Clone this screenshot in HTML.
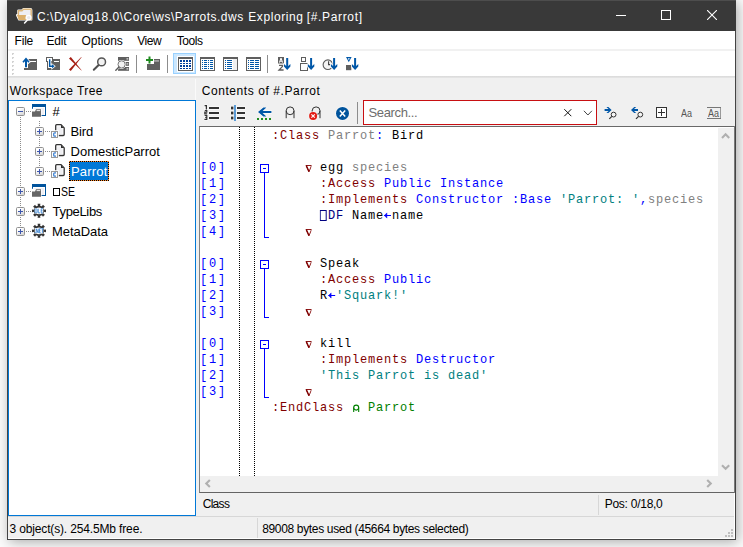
<!DOCTYPE html>
<html>
<head>
<meta charset="utf-8">
<title>Parrots.dws Exploring</title>
<style>
html,body{margin:0;padding:0;}
body{width:743px;height:547px;overflow:hidden;position:relative;background:#fbfbfb;font-family:"Liberation Sans",sans-serif;font-size:12px;color:#000;}
div,span,svg{position:absolute;box-sizing:border-box;}
#shadowL{left:0;top:0;width:7px;height:547px;background:linear-gradient(to right,#f8f8f8,#e2e2e2);}
#shadowR{left:736px;top:0;width:7px;height:547px;background:linear-gradient(to right,#c9c9c9,#ececec);}
#shadowB{left:0;top:540px;width:743px;height:7px;background:linear-gradient(to bottom,#c8c8c8,#f2f2f2);}
#win{left:7px;top:0;width:729px;height:540px;background:#f0f0f0;border:1px solid #444;box-shadow:2px 2px 12px 0 rgba(0,0,0,0.32);}
#title{left:7px;top:0;width:729px;height:31px;background:#393939;border-top:1px solid #4d4d4d;}
#menubar{left:8px;top:31px;width:727px;height:18px;background:#fff;}
#menuline{left:8px;top:49px;width:727px;height:2px;background:#f1f1f1;}
#toolbar{left:8px;top:51px;width:727px;height:25px;background:#fff;}
#toolline{left:8px;top:76px;width:727px;height:2px;background:linear-gradient(to bottom,#d9d9d9,#e6e6e6);}
#tree{left:8px;top:100px;width:188px;height:416px;background:#fff;border:1px solid #0078d7;}
#sel{left:69px;top:161px;width:40px;height:20px;background:#0078d7;}
#sel i{position:absolute;}
#sel .h{left:0;width:40px;height:1px;background:repeating-linear-gradient(to right,#ff8a2a 0 1px,#000 1px 2px);}
#sel .v{top:0;width:1px;height:20px;background:repeating-linear-gradient(to bottom,#ff8a2a 0 1px,#000 1px 2px);}
#editor{left:199px;top:126px;width:536px;height:367px;background:#fff;border-left:1px solid #828282;border-top:1px solid #696969;border-bottom:1px solid #646464;}
#vsb{left:718px;top:128px;width:16px;height:348px;background:#f0f0f0;}
#hsb{left:200px;top:476px;width:534px;height:16px;background:#f0f0f0;}
.code{font-family:"Liberation Mono",monospace;font-size:13.33px;white-space:pre;line-height:16px;height:16px;left:272.4px;letter-spacing:0.889px;transform-origin:0 0;transform:scaleX(0.90);}
.code span{position:static}
.code svg{position:static;display:inline-block;vertical-align:top;letter-spacing:0;}
.ln{font-family:"Liberation Mono",monospace;font-size:13.33px;white-space:pre;line-height:16px;height:16px;left:199.6px;color:#0000ff;letter-spacing:2px;transform-origin:0 0;transform:scaleX(0.90);}
.k{color:#800000}.g{color:#808080}.b{color:#0000ff}.n{color:#0000ff}.s{color:#008080}.c{color:#008000}.q{color:#000080}
.dotv{width:1px;background-image:linear-gradient(to bottom,#000 50%,#fff 50%);background-size:1px 2px;}
.fold{border:1px solid #0000ff;background:#fff;width:9px;height:9px;left:260px;}
.fold i{position:absolute;left:2px;top:3px;width:3px;height:1px;background:#0000ff;}
.fl{left:264px;width:5px;border-left:1px solid #0000ff;border-bottom:1px solid #0000ff;}
.hl{height:1px;background:#d7d7d7;}
.vl{width:1px;background:#d7d7d7;}
</style>
</head>
<body>

<div id="win"></div>
<div id="title"></div>
<svg style="left:15px;top:6px" width="19" height="18" viewBox="0 0 19 18">
<path d="M3.4,4.8 H7 L8.4,3.2 H15.4 Q16.2,3.2 16.2,4 V13.4 H4.2 L2.2,9.2 H3.4 Z" fill="#fff" stroke="#fff" stroke-width="2.4" stroke-linejoin="round"/>
<path d="M3.4,4.8 H7 L8.4,3.2 H15.4 Q16.2,3.2 16.2,4 V13.4 H4.2 L3.4,9.2 Z" fill="#eeeef3" stroke="#dcb67a" stroke-width="1.4" stroke-linejoin="round"/>
<path d="M1.9,9 H11 L10,13.9 H4 Z" fill="#dcb06c"/>
<path d="M12.2,14.2 l-2.6,2.8" stroke="#fff" stroke-width="1.5" stroke-linecap="round"/>
<circle cx="13.7" cy="11.6" r="2.3" fill="#e9e9ee" stroke="#fff" stroke-width="1.2"/>
</svg>
<svg style="left:616px;top:10px" width="10" height="10" viewBox="0 0 10 10" shape-rendering="crispEdges"><rect x="0" y="5" width="10" height="1" fill="#fff"/></svg>
<svg style="left:661px;top:10px" width="10" height="10" viewBox="0 0 10 10" shape-rendering="crispEdges"><rect x="0.5" y="0.5" width="9" height="9" fill="none" stroke="#fff" stroke-width="1"/></svg>
<svg style="left:707px;top:10px" width="10" height="10" viewBox="0 0 10 10"><path d="M0,0 L10,10 M10,0 L0,10" stroke="#fff" stroke-width="1.1" fill="none"/></svg>
<div id="menubar"></div><div id="menuline"></div>
<div id="toolbar"></div>
<div id="toolline"></div>
<div style="left:195px;top:79px;width:1px;height:21px;background:#fafafa"></div>
<svg style="left:8px;top:51px" width="727" height="25" viewBox="0 0 727 25"><rect x="4" y="2" width="2" height="2" fill="#d2d2d2"/><rect x="5" y="3" width="1" height="1" fill="#f4f4f4"/><rect x="4" y="6" width="2" height="2" fill="#d2d2d2"/><rect x="5" y="7" width="1" height="1" fill="#f4f4f4"/><rect x="4" y="10" width="2" height="2" fill="#d2d2d2"/><rect x="5" y="11" width="1" height="1" fill="#f4f4f4"/><rect x="4" y="14" width="2" height="2" fill="#d2d2d2"/><rect x="5" y="15" width="1" height="1" fill="#f4f4f4"/><rect x="4" y="18" width="2" height="2" fill="#d2d2d2"/><rect x="5" y="19" width="1" height="1" fill="#f4f4f4"/><rect x="4" y="22" width="2" height="2" fill="#d2d2d2"/><rect x="5" y="23" width="1" height="1" fill="#f4f4f4"/><rect x="20" y="8" width="9" height="11" fill="#5f5f5f"/><rect x="16" y="17" width="13" height="2" fill="#5f5f5f"/><rect x="22" y="10" width="6" height="1" fill="#fff"/><path d="M18,6.6 l3.6,4.2 l-1.2,1.0 l-1.4,-1.6 v6 h-2 v-6 l-1.4,1.6 l-1.2,-1.0 z" fill="#0057a8" stroke="#fff" stroke-width="1.6" paint-order="stroke"/><rect x="39" y="8" width="13" height="11" fill="#5f5f5f"/><rect x="46" y="10" width="5" height="1" fill="#fff"/><rect x="38.5" y="6.5" width="6" height="4" fill="#fff" stroke="#5f5f5f" stroke-width="1"/><path d="M41.7,9 v6.3 h2.6" fill="none" stroke="#fff" stroke-width="3.2"/><path d="M44,13.3 l2.6,2 l-2.6,2 z" fill="#0057a8" stroke="#fff" stroke-width="1.4" paint-order="stroke"/><path d="M41.7,8.2 v7.1 h2.6" fill="none" stroke="#0057a8" stroke-width="1.4"/><path d="M61,7.4 L62.8,5.9 L73.6,19.3 L73.3,19.6 Z" fill="#a61d12"/><path d="M61,18.6 L62.8,20.1 L73.6,6.3 L73.3,6 Z" fill="#a61d12"/><circle cx="93.6" cy="10.9" r="3.9" fill="#f2f2f2" stroke="#555" stroke-width="1.5"/><path d="M90.4,14.2 L85.8,18.8" stroke="#505050" stroke-width="2" stroke-linecap="round"/><rect x="110" y="6" width="11" height="3.8" fill="#5f5f5f"/><rect x="118.5" y="7.4" width="1.8" height="1" fill="#fff"/><rect x="110" y="11" width="11" height="3.8" fill="#5f5f5f"/><rect x="118.5" y="12.4" width="1.8" height="1" fill="#fff"/><rect x="110" y="16" width="11" height="3.8" fill="#5f5f5f"/><rect x="118.5" y="17.4" width="1.8" height="1" fill="#fff"/><circle cx="113.6" cy="13.4" r="3.6" fill="#f2f2f2" stroke="#fff" stroke-width="1.8"/><path d="M111,16 L107.8,19.2" stroke="#fff" stroke-width="2.4" stroke-linecap="round"/><circle cx="113.6" cy="13.4" r="3.6" fill="#f2f2f2" stroke="#777" stroke-width="1"/><path d="M111,16 L107.8,19.2" stroke="#5a5a5a" stroke-width="1.4" stroke-linecap="round"/><rect x="128" y="4" width="1" height="18" fill="#8d8d8d"/><rect x="139" y="8" width="13" height="11" fill="#5f5f5f"/><rect x="145" y="9.5" width="6" height="0.9" fill="#e4e4e4"/><rect x="137" y="5" width="9" height="8" fill="#fff"/><rect x="138" y="8" width="7" height="2" fill="#1e8a1e"/><rect x="140.5" y="5.5" width="2" height="7" fill="#1e8a1e"/><rect x="159" y="4" width="1" height="18" fill="#8d8d8d"/><rect x="165.5" y="2.5" width="22" height="20" fill="#cce8ff" stroke="#99d1ff" stroke-width="1"/><rect x="169" y="5" width="17" height="16" fill="#fff"/><rect x="170" y="6" width="15" height="14" fill="#5f5f5f"/><rect x="171" y="8" width="13" height="11" fill="#fff"/><rect x="172" y="9" width="2" height="2" fill="#003f9e"/><rect x="172" y="12" width="2" height="1" fill="#003f9e"/><rect x="172" y="14" width="2" height="2" fill="#003f9e"/><rect x="172" y="17" width="2" height="1" fill="#003f9e"/><rect x="175" y="9" width="2" height="2" fill="#003f9e"/><rect x="175" y="12" width="2" height="1" fill="#003f9e"/><rect x="175" y="14" width="2" height="2" fill="#003f9e"/><rect x="175" y="17" width="2" height="1" fill="#003f9e"/><rect x="178" y="9" width="2" height="2" fill="#003f9e"/><rect x="178" y="12" width="2" height="1" fill="#003f9e"/><rect x="178" y="14" width="2" height="2" fill="#003f9e"/><rect x="178" y="17" width="2" height="1" fill="#003f9e"/><rect x="181" y="9" width="2" height="2" fill="#003f9e"/><rect x="181" y="12" width="2" height="1" fill="#003f9e"/><rect x="181" y="14" width="2" height="2" fill="#003f9e"/><rect x="181" y="17" width="2" height="1" fill="#003f9e"/><rect x="192" y="6" width="15" height="14" fill="#5f5f5f"/><rect x="193" y="8" width="13" height="11" fill="#fff"/><rect x="194" y="9" width="1" height="1" fill="#0057a8"/><rect x="196" y="9" width="3" height="1" fill="#0057a8"/><rect x="200" y="9" width="1" height="1" fill="#0057a8"/><rect x="202" y="9" width="3" height="1" fill="#0057a8"/><rect x="194" y="11" width="1" height="1" fill="#0057a8"/><rect x="196" y="11" width="3" height="1" fill="#0057a8"/><rect x="200" y="11" width="1" height="1" fill="#0057a8"/><rect x="202" y="11" width="3" height="1" fill="#0057a8"/><rect x="194" y="13" width="1" height="1" fill="#0057a8"/><rect x="196" y="13" width="3" height="1" fill="#0057a8"/><rect x="200" y="13" width="1" height="1" fill="#0057a8"/><rect x="202" y="13" width="3" height="1" fill="#0057a8"/><rect x="194" y="15" width="1" height="1" fill="#0057a8"/><rect x="196" y="15" width="3" height="1" fill="#0057a8"/><rect x="200" y="15" width="1" height="1" fill="#0057a8"/><rect x="202" y="15" width="3" height="1" fill="#0057a8"/><rect x="194" y="17" width="1" height="1" fill="#0057a8"/><rect x="196" y="17" width="3" height="1" fill="#0057a8"/><rect x="200" y="17" width="1" height="1" fill="#0057a8"/><rect x="202" y="17" width="3" height="1" fill="#0057a8"/><rect x="215" y="6" width="15" height="14" fill="#5f5f5f"/><rect x="216" y="8" width="13" height="11" fill="#fff"/><rect x="225" y="8" width="4" height="11" fill="#f0f0f0"/><rect x="217" y="9" width="1" height="1" fill="#0057a8"/><rect x="219" y="9" width="5" height="1" fill="#0057a8"/><rect x="217" y="11" width="1" height="1" fill="#0057a8"/><rect x="219" y="11" width="5" height="1" fill="#0057a8"/><rect x="217" y="13" width="1" height="1" fill="#0057a8"/><rect x="219" y="13" width="5" height="1" fill="#0057a8"/><rect x="217" y="15" width="1" height="1" fill="#0057a8"/><rect x="219" y="15" width="5" height="1" fill="#0057a8"/><rect x="217" y="17" width="1" height="1" fill="#0057a8"/><rect x="219" y="17" width="5" height="1" fill="#0057a8"/><rect x="238" y="6" width="15" height="14" fill="#5f5f5f"/><rect x="239" y="8" width="13" height="11" fill="#fff"/><rect x="240" y="9" width="1" height="1" fill="#0057a8"/><rect x="242" y="9" width="4" height="1" fill="#0057a8"/><rect x="247" y="9" width="4" height="1" fill="#0057a8"/><rect x="240" y="11" width="1" height="1" fill="#0057a8"/><rect x="242" y="11" width="4" height="1" fill="#0057a8"/><rect x="247" y="11" width="4" height="1" fill="#0057a8"/><rect x="240" y="13" width="1" height="1" fill="#0057a8"/><rect x="242" y="13" width="4" height="1" fill="#0057a8"/><rect x="247" y="13" width="4" height="1" fill="#0057a8"/><rect x="240" y="15" width="1" height="1" fill="#0057a8"/><rect x="242" y="15" width="4" height="1" fill="#0057a8"/><rect x="247" y="15" width="4" height="1" fill="#0057a8"/><rect x="240" y="17" width="1" height="1" fill="#0057a8"/><rect x="242" y="17" width="4" height="1" fill="#0057a8"/><rect x="247" y="17" width="4" height="1" fill="#0057a8"/><rect x="259" y="4" width="1" height="18" fill="#8d8d8d"/><rect x="270" y="6" width="6" height="6.5" fill="#5f5f5f"/><path d="M271.4,11.6 l1.6,-4.6 l1.6,4.6 M272,10.2 h2" stroke="#fff" stroke-width="1" fill="none"/><path d="M271,14.4 h4.4 l-4.4,4.6 h4.6" stroke="#5f5f5f" stroke-width="1.3" fill="none"/><g transform="translate(-8,-51)"><rect x="285.4" y="57.4" width="3.6" height="10" fill="#fff"/><path d="M284,64 L286.2,66.1 L288.2,66.1 L290.4,64 L290.4,66.6 L287.2,70 L284,66.6 Z" fill="#fff" stroke="#fff" stroke-width="1.6" stroke-linejoin="round"/><rect x="286.2" y="58" width="2" height="10" fill="#0057a8"/><path d="M284,64 L286.2,66.1 L288.2,66.1 L290.4,64 L290.4,66.6 L287.2,70 L284,66.6 Z" fill="#0057a8"/></g><rect x="293.5" y="6.5" width="4" height="4" fill="#fff" stroke="#5f5f5f"/><rect x="292.5" y="12.5" width="7" height="7" fill="#fff" stroke="#5f5f5f"/><g transform="translate(-8,-51)"><rect x="309.3" y="57.4" width="3.6" height="10" fill="#fff"/><path d="M307.9,64 L310.1,66.1 L312.1,66.1 L314.3,64 L314.3,66.6 L311.1,70 L307.9,66.6 Z" fill="#fff" stroke="#fff" stroke-width="1.6" stroke-linejoin="round"/><rect x="310.1" y="58" width="2" height="10" fill="#0057a8"/><path d="M307.9,64 L310.1,66.1 L312.1,66.1 L314.3,64 L314.3,66.6 L311.1,70 L307.9,66.6 Z" fill="#0057a8"/></g><circle cx="319.9" cy="13.7" r="4.8" fill="#f4f4f4" stroke="#5a5a5a" stroke-width="1.1"/><path d="M320.6,10.2 v3.4 h1.8" stroke="#404040" stroke-width="1.1" fill="none"/><g transform="translate(-8,-51)"><rect x="332.3" y="57.4" width="3.6" height="10" fill="#fff"/><path d="M330.9,64 L333.1,66.1 L335.1,66.1 L337.3,64 L337.3,66.6 L334.1,70 L330.9,66.6 Z" fill="#fff" stroke="#fff" stroke-width="1.6" stroke-linejoin="round"/><rect x="333.1" y="58" width="2" height="10" fill="#0057a8"/><path d="M330.9,64 L333.1,66.1 L335.1,66.1 L337.3,64 L337.3,66.6 L334.1,70 L330.9,66.6 Z" fill="#0057a8"/></g><path d="M338,6 h5.6 l-2.8,5.2 z" fill="#0057a8"/><path d="M339.8,7.3 h2 l-1,1.9 z" fill="#fff"/><rect x="338" y="14" width="5.3" height="5.2" fill="#5f5f5f"/><g transform="translate(-8,-51)"><rect x="353.3" y="57.4" width="3.6" height="10" fill="#fff"/><path d="M351.9,64 L354.1,66.1 L356.1,66.1 L358.3,64 L358.3,66.6 L355.1,70 L351.9,66.6 Z" fill="#fff" stroke="#fff" stroke-width="1.6" stroke-linejoin="round"/><rect x="354.1" y="58" width="2" height="10" fill="#0057a8"/><path d="M351.9,64 L354.1,66.1 L356.1,66.1 L358.3,64 L358.3,66.6 L355.1,70 L351.9,66.6 Z" fill="#0057a8"/></g></svg>
<div id="tree"></div>
<div id="sel"><i class="h" style="top:0"></i><i class="h" style="top:19px"></i><i class="v" style="left:0"></i><i class="v" style="left:39px"></i></div>
<svg style="left:9px;top:101px" width="186" height="414" viewBox="0 0 186 414"><rect x="11" y="16" width="1" height="1" fill="#8c8c8c"/><rect x="11" y="18" width="1" height="1" fill="#8c8c8c"/><rect x="11" y="20" width="1" height="1" fill="#8c8c8c"/><rect x="11" y="22" width="1" height="1" fill="#8c8c8c"/><rect x="11" y="24" width="1" height="1" fill="#8c8c8c"/><rect x="11" y="26" width="1" height="1" fill="#8c8c8c"/><rect x="11" y="28" width="1" height="1" fill="#8c8c8c"/><rect x="11" y="30" width="1" height="1" fill="#8c8c8c"/><rect x="11" y="32" width="1" height="1" fill="#8c8c8c"/><rect x="11" y="34" width="1" height="1" fill="#8c8c8c"/><rect x="11" y="36" width="1" height="1" fill="#8c8c8c"/><rect x="11" y="38" width="1" height="1" fill="#8c8c8c"/><rect x="11" y="40" width="1" height="1" fill="#8c8c8c"/><rect x="11" y="42" width="1" height="1" fill="#8c8c8c"/><rect x="11" y="44" width="1" height="1" fill="#8c8c8c"/><rect x="11" y="46" width="1" height="1" fill="#8c8c8c"/><rect x="11" y="48" width="1" height="1" fill="#8c8c8c"/><rect x="11" y="50" width="1" height="1" fill="#8c8c8c"/><rect x="11" y="52" width="1" height="1" fill="#8c8c8c"/><rect x="11" y="54" width="1" height="1" fill="#8c8c8c"/><rect x="11" y="56" width="1" height="1" fill="#8c8c8c"/><rect x="11" y="58" width="1" height="1" fill="#8c8c8c"/><rect x="11" y="60" width="1" height="1" fill="#8c8c8c"/><rect x="11" y="62" width="1" height="1" fill="#8c8c8c"/><rect x="11" y="64" width="1" height="1" fill="#8c8c8c"/><rect x="11" y="66" width="1" height="1" fill="#8c8c8c"/><rect x="11" y="68" width="1" height="1" fill="#8c8c8c"/><rect x="11" y="70" width="1" height="1" fill="#8c8c8c"/><rect x="11" y="72" width="1" height="1" fill="#8c8c8c"/><rect x="11" y="74" width="1" height="1" fill="#8c8c8c"/><rect x="11" y="76" width="1" height="1" fill="#8c8c8c"/><rect x="11" y="78" width="1" height="1" fill="#8c8c8c"/><rect x="11" y="80" width="1" height="1" fill="#8c8c8c"/><rect x="11" y="82" width="1" height="1" fill="#8c8c8c"/><rect x="11" y="84" width="1" height="1" fill="#8c8c8c"/><rect x="11" y="86" width="1" height="1" fill="#8c8c8c"/><rect x="11" y="88" width="1" height="1" fill="#8c8c8c"/><rect x="11" y="90" width="1" height="1" fill="#8c8c8c"/><rect x="11" y="92" width="1" height="1" fill="#8c8c8c"/><rect x="11" y="94" width="1" height="1" fill="#8c8c8c"/><rect x="11" y="96" width="1" height="1" fill="#8c8c8c"/><rect x="11" y="98" width="1" height="1" fill="#8c8c8c"/><rect x="11" y="100" width="1" height="1" fill="#8c8c8c"/><rect x="11" y="102" width="1" height="1" fill="#8c8c8c"/><rect x="11" y="104" width="1" height="1" fill="#8c8c8c"/><rect x="11" y="106" width="1" height="1" fill="#8c8c8c"/><rect x="11" y="108" width="1" height="1" fill="#8c8c8c"/><rect x="11" y="110" width="1" height="1" fill="#8c8c8c"/><rect x="11" y="112" width="1" height="1" fill="#8c8c8c"/><rect x="11" y="114" width="1" height="1" fill="#8c8c8c"/><rect x="11" y="116" width="1" height="1" fill="#8c8c8c"/><rect x="11" y="118" width="1" height="1" fill="#8c8c8c"/><rect x="11" y="120" width="1" height="1" fill="#8c8c8c"/><rect x="11" y="122" width="1" height="1" fill="#8c8c8c"/><rect x="11" y="124" width="1" height="1" fill="#8c8c8c"/><rect x="11" y="126" width="1" height="1" fill="#8c8c8c"/><rect x="11" y="128" width="1" height="1" fill="#8c8c8c"/><rect x="11" y="130" width="1" height="1" fill="#8c8c8c"/><rect x="30" y="20" width="1" height="1" fill="#8c8c8c"/><rect x="30" y="22" width="1" height="1" fill="#8c8c8c"/><rect x="30" y="24" width="1" height="1" fill="#8c8c8c"/><rect x="30" y="26" width="1" height="1" fill="#8c8c8c"/><rect x="30" y="28" width="1" height="1" fill="#8c8c8c"/><rect x="30" y="30" width="1" height="1" fill="#8c8c8c"/><rect x="30" y="32" width="1" height="1" fill="#8c8c8c"/><rect x="30" y="34" width="1" height="1" fill="#8c8c8c"/><rect x="30" y="36" width="1" height="1" fill="#8c8c8c"/><rect x="30" y="38" width="1" height="1" fill="#8c8c8c"/><rect x="30" y="40" width="1" height="1" fill="#8c8c8c"/><rect x="30" y="42" width="1" height="1" fill="#8c8c8c"/><rect x="30" y="44" width="1" height="1" fill="#8c8c8c"/><rect x="30" y="46" width="1" height="1" fill="#8c8c8c"/><rect x="30" y="48" width="1" height="1" fill="#8c8c8c"/><rect x="30" y="50" width="1" height="1" fill="#8c8c8c"/><rect x="30" y="52" width="1" height="1" fill="#8c8c8c"/><rect x="30" y="54" width="1" height="1" fill="#8c8c8c"/><rect x="30" y="56" width="1" height="1" fill="#8c8c8c"/><rect x="30" y="58" width="1" height="1" fill="#8c8c8c"/><rect x="30" y="60" width="1" height="1" fill="#8c8c8c"/><rect x="30" y="62" width="1" height="1" fill="#8c8c8c"/><rect x="30" y="64" width="1" height="1" fill="#8c8c8c"/><rect x="30" y="66" width="1" height="1" fill="#8c8c8c"/><rect x="30" y="68" width="1" height="1" fill="#8c8c8c"/><rect x="30" y="70" width="1" height="1" fill="#8c8c8c"/><rect x="17" y="10" width="1" height="1" fill="#8c8c8c"/><rect x="19" y="10" width="1" height="1" fill="#8c8c8c"/><rect x="21" y="10" width="1" height="1" fill="#8c8c8c"/><rect x="36" y="30" width="1" height="1" fill="#8c8c8c"/><rect x="38" y="30" width="1" height="1" fill="#8c8c8c"/><rect x="40" y="30" width="1" height="1" fill="#8c8c8c"/><rect x="36" y="50" width="1" height="1" fill="#8c8c8c"/><rect x="38" y="50" width="1" height="1" fill="#8c8c8c"/><rect x="40" y="50" width="1" height="1" fill="#8c8c8c"/><rect x="36" y="70" width="1" height="1" fill="#8c8c8c"/><rect x="38" y="70" width="1" height="1" fill="#8c8c8c"/><rect x="40" y="70" width="1" height="1" fill="#8c8c8c"/><rect x="17" y="90" width="1" height="1" fill="#8c8c8c"/><rect x="19" y="90" width="1" height="1" fill="#8c8c8c"/><rect x="21" y="90" width="1" height="1" fill="#8c8c8c"/><rect x="17" y="110" width="1" height="1" fill="#8c8c8c"/><rect x="19" y="110" width="1" height="1" fill="#8c8c8c"/><rect x="21" y="110" width="1" height="1" fill="#8c8c8c"/><rect x="17" y="130" width="1" height="1" fill="#8c8c8c"/><rect x="19" y="130" width="1" height="1" fill="#8c8c8c"/><rect x="21" y="130" width="1" height="1" fill="#8c8c8c"/><defs><linearGradient id="bx" x1="0" y1="0" x2="0.6" y2="1"><stop offset="0.3" stop-color="#fff"/><stop offset="1" stop-color="#d8d8d8"/></linearGradient></defs><rect x="7.5" y="6.5" width="8" height="8" rx="1.1" fill="url(#bx)" stroke="#919191" stroke-width="1"/><rect x="9" y="10" width="5" height="1" fill="#3c55ad"/><rect x="26.5" y="26.5" width="8" height="8" rx="1.1" fill="url(#bx)" stroke="#919191" stroke-width="1"/><rect x="28" y="30" width="5" height="1" fill="#3c55ad"/><rect x="30" y="28" width="1" height="5" fill="#3c55ad"/><rect x="26.5" y="46.5" width="8" height="8" rx="1.1" fill="url(#bx)" stroke="#919191" stroke-width="1"/><rect x="28" y="50" width="5" height="1" fill="#3c55ad"/><rect x="30" y="48" width="1" height="5" fill="#3c55ad"/><rect x="26.5" y="66.5" width="8" height="8" rx="1.1" fill="url(#bx)" stroke="#919191" stroke-width="1"/><rect x="28" y="70" width="5" height="1" fill="#3c55ad"/><rect x="30" y="68" width="1" height="5" fill="#3c55ad"/><rect x="7.5" y="86.5" width="8" height="8" rx="1.1" fill="url(#bx)" stroke="#919191" stroke-width="1"/><rect x="9" y="90" width="5" height="1" fill="#3c55ad"/><rect x="11" y="88" width="1" height="5" fill="#3c55ad"/><rect x="7.5" y="106.5" width="8" height="8" rx="1.1" fill="url(#bx)" stroke="#919191" stroke-width="1"/><rect x="9" y="110" width="5" height="1" fill="#3c55ad"/><rect x="11" y="108" width="1" height="5" fill="#3c55ad"/><rect x="7.5" y="126.5" width="8" height="8" rx="1.1" fill="url(#bx)" stroke="#919191" stroke-width="1"/><rect x="9" y="130" width="5" height="1" fill="#3c55ad"/><rect x="11" y="128" width="1" height="5" fill="#3c55ad"/><rect x="23" y="3" width="14" height="12" fill="#00539c"/><rect x="24" y="6" width="12" height="8" fill="#fff"/><rect x="25" y="7" width="10" height="7" fill="#efeff4"/><rect x="22.6" y="7.8" width="10" height="8.6" fill="#fff"/><path d="M23,15.8 V10.5 H26 L27,8.2 H32 V15.8 Z" fill="#666"/><rect x="27.6" y="9.2" width="3.6" height="0.9" fill="#fff"/><rect x="23" y="83" width="14" height="12" fill="#00539c"/><rect x="24" y="86" width="12" height="8" fill="#fff"/><rect x="25" y="87" width="10" height="7" fill="#efeff4"/><rect x="22.6" y="87.8" width="10" height="8.6" fill="#fff"/><path d="M23,95.8 V90.5 H26 L27,88.2 H32 V95.8 Z" fill="#666"/><rect x="27.6" y="89.2" width="3.6" height="0.9" fill="#fff"/><path d="M46.7,24.7 q0,-1 1,-1 h4.3 l3.2,3.2 v6.6 q0,1 -1,1 h-6.5 q-1,0 -1,-1 z" fill="#fff" stroke="#333" stroke-width="1.3"/><rect x="48" y="25.4" width="5.6" height="8" fill="#efeff2"/><path d="M52,23.9 v3.2 h3.2 z" fill="#333"/><rect x="41.4" y="29.2" width="8.4" height="8.4" fill="#fff"/><rect x="42.5" y="30.5" width="6" height="6" fill="#fff" stroke="#9a9a9a" stroke-width="1"/><path d="M47,31.8 h-1.4 q-0.9,0 -0.9,0.9 v1.6 q0,0.9 0.9,0.9 h1.4" fill="none" stroke="#3a7fd0" stroke-width="1.25"/><path d="M46.7,44.7 q0,-1 1,-1 h4.3 l3.2,3.2 v6.6 q0,1 -1,1 h-6.5 q-1,0 -1,-1 z" fill="#fff" stroke="#333" stroke-width="1.3"/><rect x="48" y="45.4" width="5.6" height="8" fill="#efeff2"/><path d="M52,43.9 v3.2 h3.2 z" fill="#333"/><rect x="41.4" y="49.2" width="8.4" height="8.4" fill="#fff"/><rect x="42.5" y="50.5" width="6" height="6" fill="#fff" stroke="#9a9a9a" stroke-width="1"/><path d="M47,51.8 h-1.4 q-0.9,0 -0.9,0.9 v1.6 q0,0.9 0.9,0.9 h1.4" fill="none" stroke="#3a7fd0" stroke-width="1.25"/><path d="M46.7,64.7 q0,-1 1,-1 h4.3 l3.2,3.2 v6.6 q0,1 -1,1 h-6.5 q-1,0 -1,-1 z" fill="#fff" stroke="#333" stroke-width="1.3"/><rect x="48" y="65.4" width="5.6" height="8" fill="#efeff2"/><path d="M52,63.9 v3.2 h3.2 z" fill="#333"/><rect x="41.4" y="69.2" width="8.4" height="8.4" fill="#fff"/><rect x="42.5" y="70.5" width="6" height="6" fill="#fff" stroke="#9a9a9a" stroke-width="1"/><path d="M47,71.8 h-1.4 q-0.9,0 -0.9,0.9 v1.6 q0,0.9 0.9,0.9 h1.4" fill="none" stroke="#3a7fd0" stroke-width="1.25"/><path d="M28.6,102.8 h2.8 l-0.4,2.4 h-2 z M28.6,116.8 h2.8 l-0.4,-2.4 h-2 z" fill="#333" transform="rotate(0 30 109.8)"/><path d="M28.6,102.8 h2.8 l-0.4,2.4 h-2 z M28.6,116.8 h2.8 l-0.4,-2.4 h-2 z" fill="#333" transform="rotate(45 30 109.8)"/><path d="M28.6,102.8 h2.8 l-0.4,2.4 h-2 z M28.6,116.8 h2.8 l-0.4,-2.4 h-2 z" fill="#333" transform="rotate(90 30 109.8)"/><path d="M28.6,102.8 h2.8 l-0.4,2.4 h-2 z M28.6,116.8 h2.8 l-0.4,-2.4 h-2 z" fill="#333" transform="rotate(135 30 109.8)"/><circle cx="30" cy="109.8" r="4.3" fill="#fff" stroke="#333" stroke-width="1.9"/><rect x="25.7" y="107" width="8.6" height="5.6" fill="#fff"/><rect x="26" y="107.7" width="2" height="4.2" rx="0.8" fill="none" stroke="#3d86d2" stroke-width="0.9"/><path d="M29.2,107.7 v4.2 h1.8" fill="none" stroke="#3d86d2" stroke-width="0.9"/><path d="M34,107.7 h-1.8 v4.2 h1.8 M32.2,109.8 h1.4" fill="none" stroke="#3d86d2" stroke-width="0.9"/><path d="M28.6,122.8 h2.8 l-0.4,2.4 h-2 z M28.6,136.8 h2.8 l-0.4,-2.4 h-2 z" fill="#333" transform="rotate(0 30 129.8)"/><path d="M28.6,122.8 h2.8 l-0.4,2.4 h-2 z M28.6,136.8 h2.8 l-0.4,-2.4 h-2 z" fill="#333" transform="rotate(45 30 129.8)"/><path d="M28.6,122.8 h2.8 l-0.4,2.4 h-2 z M28.6,136.8 h2.8 l-0.4,-2.4 h-2 z" fill="#333" transform="rotate(90 30 129.8)"/><path d="M28.6,122.8 h2.8 l-0.4,2.4 h-2 z M28.6,136.8 h2.8 l-0.4,-2.4 h-2 z" fill="#333" transform="rotate(135 30 129.8)"/><circle cx="30" cy="129.8" r="4.3" fill="#fff" stroke="#333" stroke-width="1.9"/><rect x="25.7" y="127" width="8.6" height="5.6" fill="#fff"/><rect x="25.7" y="131.1" width="0.9" height="0.9" fill="#3d86d2"/><path d="M27.2,131.9 v-4.2 l2,4.2 v-4.2" fill="none" stroke="#3d86d2" stroke-width="0.9"/><path d="M31.9,127.7 h-1.5 v4.2 h1.5 M30.4,129.8 h1.1" fill="none" stroke="#3d86d2" stroke-width="0.9"/><path d="M32.3,127.7 h2.2 m-1.1,0 v4.2" fill="none" stroke="#3d86d2" stroke-width="0.9"/></svg>
<div style="left:53px;top:188px;width:7px;height:8px;border:1px solid #000"></div>
<svg style="left:199px;top:100px" width="536" height="26" viewBox="0 0 536 26"><rect x="9.5" y="6.2" width="11" height="3.6" fill="#fafafa"/><rect x="10" y="7" width="10" height="2" fill="#333"/><rect x="9.5" y="11.2" width="11" height="3.6" fill="#fafafa"/><rect x="10" y="12" width="10" height="2" fill="#333"/><rect x="9.5" y="16.2" width="11" height="3.6" fill="#fafafa"/><rect x="10" y="17" width="10" height="2" fill="#333"/><rect x="5" y="4.5" width="4" height="16" fill="#fafafa"/><path d="M5.6,5.6 h1.8 v3.8" stroke="#333" stroke-width="1.3" fill="none"/><path d="M5.8,10.5 h2 v1.6 h-2 v1.8 h2.4" stroke="#333" stroke-width="1.2" fill="none"/><path d="M5.6,15.5 h2.2 v1.9 h-1.6 M7.8,17.4 v2 h-2.4" stroke="#333" stroke-width="1.2" fill="none"/><rect x="31.5" y="6.2" width="15" height="3.6" fill="#fafafa"/><rect x="32" y="6.6" width="2.4" height="2.8" fill="#333"/><rect x="38" y="7" width="8" height="2" fill="#333"/><rect x="31.5" y="11.2" width="15" height="3.6" fill="#fafafa"/><rect x="32" y="11.6" width="2.4" height="2.8" fill="#333"/><rect x="38" y="12" width="8" height="2" fill="#333"/><rect x="31.5" y="16.2" width="15" height="3.6" fill="#fafafa"/><rect x="32" y="16.6" width="2.4" height="2.8" fill="#333"/><rect x="38" y="17" width="8" height="2" fill="#333"/><rect x="35" y="5" width="2" height="16" fill="#5b9bd5"/><path d="M59,12 l5.4,-4.4 h3 l-3.8,3.3 h8.8 v2.2 h-8.8 l3.8,3.3 h-3 z" fill="#0057a8" stroke="#fafafa" stroke-width="1.2" paint-order="stroke"/><rect x="58" y="18" width="2" height="2" fill="#1e8a1e"/><rect x="62" y="18" width="2" height="2" fill="#1e8a1e"/><rect x="66" y="18" width="2" height="2" fill="#1e8a1e"/><rect x="70" y="18" width="2" height="2" fill="#1e8a1e"/><circle cx="91.1" cy="10.8" r="3.9" fill="none" stroke="#333" stroke-width="1"/><path d="M87.2,10.8 V18.2 M95,10.8 V18.2" stroke="#333" stroke-width="1" fill="none"/><circle cx="117.1" cy="10.8" r="3.9" fill="none" stroke="#333" stroke-width="1"/><path d="M113.2,10.8 V18.2 M121,10.8 V18.2" stroke="#333" stroke-width="1" fill="none"/><circle cx="114.1" cy="16" r="4.7" fill="#f6f6f6"/><circle cx="114.1" cy="16" r="4" fill="#e31b13"/><path d="M112.4,14.3 l3.4,3.4 m0,-3.4 l-3.4,3.4" stroke="#fff" stroke-width="1.2"/><circle cx="143.5" cy="13.4" r="7.1" fill="#fafafa"/><circle cx="143.5" cy="13.4" r="6.5" fill="#00539c"/><path d="M140.8,10.4 l5.4,6 m0,-6 l-5.4,6" stroke="#fff" stroke-width="1.5"/><rect x="158" y="2" width="1" height="22" fill="#8d8d8d"/><rect x="164.5" y="0.5" width="233" height="24" fill="#fff" stroke="#c80f12" stroke-width="1"/><path d="M365.3,9.2 l7,7 m0,-7 l-7,7" stroke="#111" stroke-width="1" fill="none"/><path d="M384.9,10.8 l4,4.2 l4,-4.2" stroke="#444" stroke-width="1" fill="none"/><path d="M412.6,10 l-3.2,-3 h-2 l2.2,2.1 h-4 v1.8 h4 l-2.2,2.1 h2 z" fill="#0057a8"/><circle cx="414.6" cy="14.6" r="2.4" fill="#f6f6f6" stroke="#333" stroke-width="1"/><path d="M412.9,16.3 l-2.6,2.6" stroke="#333" stroke-width="1.2"/><path d="M432,10 l3.2,-3 h2 l-2.2,2.1 h4 v1.8 h-4 l2.2,2.1 h-2 z" fill="#0057a8"/><circle cx="441.3" cy="14.6" r="2.4" fill="#f6f6f6" stroke="#333" stroke-width="1"/><path d="M439.6,16.3 l-2.6,2.6" stroke="#333" stroke-width="1.2"/><rect x="457.5" y="7.5" width="10" height="10" fill="#fff" stroke="#333" stroke-width="1"/><path d="M459,12.5 h7 M462.5,9 v7" stroke="#333" stroke-width="1"/><rect x="508" y="7" width="14" height="1" fill="#777"/><rect x="508" y="18" width="14" height="1" fill="#777"/><rect x="521" y="8" width="1" height="10" fill="#999"/></svg>
<div id="editor"></div>
<div id="vsb"></div><div id="hsb"></div>
<svg style="left:718px;top:127px" width="17" height="366" viewBox="0 0 17 366"><g fill="none" stroke="#b0b0b0" stroke-width="2.1">
<path d="M4.0,10.9 L7.6,7.3 L11.2,10.9"/><path d="M4.0,338.25 L7.6,341.85 L11.2,338.25"/></g></svg>
<svg style="left:200px;top:476px" width="518" height="16" viewBox="0 0 518 16"><g fill="none" stroke="#b0b0b0" stroke-width="2.1">
<path d="M9.85,3.9 L6.25,7.5 L9.85,11.1"/><path d="M507.2,3.9 L510.8,7.5 L507.2,11.1"/></g></svg>
<div style="left:734px;top:126px;width:1px;height:367px;background:#7a7a7a"></div>
<span class="code" style="top:128px"><span class="k">:Class</span> <span class="g">Parrot</span><span class="b">:</span> Bird</span>

<span class="ln" style="top:160px">[0]</span><span class="code" style="top:160px">    <svg width="8.889" height="16" viewBox="0 0 8 16" preserveAspectRatio="none"><path d="M1.6,5.5 H7.2 L4.5,11.9 Z" fill="none" stroke="#800000" stroke-width="0.9" stroke-linejoin="miter"/><path d="M1.9,5.6 L4.6,11.6" stroke="#800000" stroke-width="1.3" fill="none"/></svg> egg <span class="g">species</span></span>
<span class="ln" style="top:176px">[1]</span><span class="code" style="top:176px">      <span class="k">:Access</span> <span class="n">Public Instance</span></span>
<span class="ln" style="top:192px">[2]</span><span class="code" style="top:192px">      <span class="k">:Implements</span> <span class="n">Constructor</span> <span class="n">:Base</span> <span class="s">'Parrot: '</span><span class="b">,</span><span class="g">species</span></span>
<span class="ln" style="top:208px">[3]</span><span class="code" style="top:208px">      <svg width="8.889" height="16" viewBox="0 0 8 16" preserveAspectRatio="none"><rect x="0.5" y="2.5" width="6" height="10" fill="none" stroke="#000080" stroke-width="1"/></svg><span class="q">DF</span> Name<svg width="8.889" height="16" viewBox="0 0 8 16" preserveAspectRatio="none"><path d="M0.6,7.5 H7.4" stroke="#0000ff" stroke-width="1.1" fill="none"/><path d="M3.3,4.9 L0.8,7.5 L3.3,10.1 L3.3,7.5 Z" fill="#0000ff" stroke="#0000ff" stroke-width="0.5"/></svg>name</span>
<span class="ln" style="top:224px">[4]</span><span class="code" style="top:224px">    <svg width="8.889" height="16" viewBox="0 0 8 16" preserveAspectRatio="none"><path d="M1.6,5.5 H7.2 L4.5,11.9 Z" fill="none" stroke="#800000" stroke-width="0.9" stroke-linejoin="miter"/><path d="M1.9,5.6 L4.6,11.6" stroke="#800000" stroke-width="1.3" fill="none"/></svg></span>

<span class="ln" style="top:256px">[0]</span><span class="code" style="top:256px">    <svg width="8.889" height="16" viewBox="0 0 8 16" preserveAspectRatio="none"><path d="M1.6,5.5 H7.2 L4.5,11.9 Z" fill="none" stroke="#800000" stroke-width="0.9" stroke-linejoin="miter"/><path d="M1.9,5.6 L4.6,11.6" stroke="#800000" stroke-width="1.3" fill="none"/></svg> Speak</span>
<span class="ln" style="top:272px">[1]</span><span class="code" style="top:272px">      <span class="k">:Access</span> <span class="n">Public</span></span>
<span class="ln" style="top:288px">[2]</span><span class="code" style="top:288px">      R<svg width="8.889" height="16" viewBox="0 0 8 16" preserveAspectRatio="none"><path d="M0.6,7.5 H7.4" stroke="#0000ff" stroke-width="1.1" fill="none"/><path d="M3.3,4.9 L0.8,7.5 L3.3,10.1 L3.3,7.5 Z" fill="#0000ff" stroke="#0000ff" stroke-width="0.5"/></svg><span class="s">'Squark!'</span></span>
<span class="ln" style="top:304px">[3]</span><span class="code" style="top:304px">    <svg width="8.889" height="16" viewBox="0 0 8 16" preserveAspectRatio="none"><path d="M1.6,5.5 H7.2 L4.5,11.9 Z" fill="none" stroke="#800000" stroke-width="0.9" stroke-linejoin="miter"/><path d="M1.9,5.6 L4.6,11.6" stroke="#800000" stroke-width="1.3" fill="none"/></svg></span>

<span class="ln" style="top:336px">[0]</span><span class="code" style="top:336px">    <svg width="8.889" height="16" viewBox="0 0 8 16" preserveAspectRatio="none"><path d="M1.6,5.5 H7.2 L4.5,11.9 Z" fill="none" stroke="#800000" stroke-width="0.9" stroke-linejoin="miter"/><path d="M1.9,5.6 L4.6,11.6" stroke="#800000" stroke-width="1.3" fill="none"/></svg> kill</span>
<span class="ln" style="top:352px">[1]</span><span class="code" style="top:352px">      <span class="k">:Implements</span> <span class="n">Destructor</span></span>
<span class="ln" style="top:368px">[2]</span><span class="code" style="top:368px">      <span class="s">'This Parrot is dead'</span></span>
<span class="ln" style="top:384px">[3]</span><span class="code" style="top:384px">    <svg width="8.889" height="16" viewBox="0 0 8 16" preserveAspectRatio="none"><path d="M1.6,5.5 H7.2 L4.5,11.9 Z" fill="none" stroke="#800000" stroke-width="0.9" stroke-linejoin="miter"/><path d="M1.9,5.6 L4.6,11.6" stroke="#800000" stroke-width="1.3" fill="none"/></svg></span>
<span class="code" style="top:400px"><span class="k">:EndClass</span> <span class="c"><svg width="8.889" height="16" viewBox="0 0 8 16" preserveAspectRatio="none"><circle cx="4.1" cy="7.6" r="2.5" fill="none" stroke="#008000" stroke-width="1.1"/><path d="M1.6,7.6 V11.9 M6.6,7.6 V11.9" stroke="#008000" stroke-width="1.1" fill="none"/></svg> Parrot</span></span>
<div class="dotv" style="left:239px;top:127px;height:349px"></div><div class="dotv" style="left:254px;top:127px;height:349px"></div>
<div class="fold" style="top:164px"><i></i></div><div class="fl" style="top:173px;height:65px"></div>
<div class="fold" style="top:260px"><i></i></div><div class="fl" style="top:269px;height:49px"></div>
<div class="fold" style="top:340px"><i></i></div><div class="fl" style="top:349px;height:49px"></div>
<div class="hl" style="left:8px;top:516px;width:727px"></div>
<div style="left:734px;top:493px;width:1px;height:46px;background:#fff"></div><div style="left:8px;top:538px;width:727px;height:1px;background:#fff"></div>
<div class="vl" style="left:598px;top:495px;height:20px"></div>
<div class="vl" style="left:257px;top:518px;height:20px"></div>
<svg style="left:725px;top:529px" width="11" height="11" viewBox="0 0 11 11" shape-rendering="crispEdges"><rect x="6" y="0" width="2" height="2" fill="#bfbfbf"/><rect x="3" y="3" width="2" height="2" fill="#bfbfbf"/><rect x="6" y="3" width="2" height="2" fill="#bfbfbf"/><rect x="0" y="6" width="2" height="2" fill="#bfbfbf"/><rect x="3" y="6" width="2" height="2" fill="#bfbfbf"/><rect x="6" y="6" width="2" height="2" fill="#bfbfbf"/></svg>
<span id="tt1" style="left:37.1px;top:7px;font-size:12px;letter-spacing:0.50px;color:#fff;line-height:20px;height:20px;white-space:pre;">C:\Dyalog18.0\Core\ws\Parrots.dws</span>
<span id="tt2" style="left:248.2px;top:7px;font-size:12px;letter-spacing:0.60px;color:#fff;line-height:20px;height:20px;white-space:pre;">Exploring</span>
<span id="tt3" style="left:306.7px;top:7px;font-size:12px;letter-spacing:0.66px;color:#fff;line-height:20px;height:20px;white-space:pre;">[#.Parrot]</span>
<span id="m1" style="left:14.6px;top:31px;font-size:12px;letter-spacing:-0.23px;color:#000;line-height:20px;height:20px;white-space:pre;">File</span>
<span id="m2" style="left:46.6px;top:31px;font-size:12px;letter-spacing:-0.27px;color:#000;line-height:20px;height:20px;white-space:pre;">Edit</span>
<span id="m3" style="left:81.5px;top:31px;font-size:12px;letter-spacing:0.00px;color:#000;line-height:20px;height:20px;white-space:pre;">Options</span>
<span id="m4" style="left:137.2px;top:31px;font-size:12px;letter-spacing:-0.40px;color:#000;line-height:20px;height:20px;white-space:pre;">View</span>
<span id="m5" style="left:176.7px;top:31px;font-size:12px;letter-spacing:-0.42px;color:#000;line-height:20px;height:20px;white-space:pre;">Tools</span>
<span id="l1" style="left:9.8px;top:81px;font-size:12px;letter-spacing:0.42px;color:#000;line-height:20px;height:20px;white-space:pre;">Workspace Tree</span>
<span id="l2" style="left:201.7px;top:81px;font-size:12px;letter-spacing:0.57px;color:#000;line-height:20px;height:20px;white-space:pre;">Contents of #.Parrot</span>
<span id="t0" style="left:52.6px;top:102px;font-size:13px;letter-spacing:-0.10px;color:#000;line-height:20px;height:20px;white-space:pre;">#</span>
<span id="t1" style="left:70.6px;top:122px;font-size:13px;letter-spacing:-0.17px;color:#000;line-height:20px;height:20px;white-space:pre;">Bird</span>
<span id="t2" style="left:70.6px;top:142px;font-size:13px;letter-spacing:-0.03px;color:#000;line-height:20px;height:20px;white-space:pre;">DomesticParrot</span>
<span id="t3" style="left:71.0px;top:162px;font-size:13px;letter-spacing:0.18px;color:#fff;line-height:20px;height:20px;white-space:pre;">Parrot</span>
<span id="t4" style="left:60.7px;top:182px;font-size:13px;transform-origin:0 0;transform:scaleX(0.806);color:#000;line-height:20px;height:20px;white-space:pre;">SE</span>
<span id="t5" style="left:52.6px;top:202px;font-size:13px;letter-spacing:-0.33px;color:#000;line-height:20px;height:20px;white-space:pre;">TypeLibs</span>
<span id="t6" style="left:52.0px;top:222px;font-size:13px;letter-spacing:-0.04px;color:#000;line-height:20px;height:20px;white-space:pre;">MetaData</span>
<span id="s1" style="left:9.5px;top:519px;font-size:12px;letter-spacing:-0.15px;color:#000;line-height:20px;height:20px;white-space:pre;">3 object(s). 254.5Mb free.</span>
<span id="s2" style="left:262.2px;top:519px;font-size:12px;letter-spacing:-0.34px;color:#000;line-height:20px;height:20px;white-space:pre;">89008 bytes used (45664 bytes selected)</span>
<span id="s3" style="left:202.7px;top:494px;font-size:12px;letter-spacing:-0.70px;color:#000;line-height:20px;height:20px;white-space:pre;">Class</span>
<span id="s4" style="left:604.7px;top:494px;font-size:12px;letter-spacing:-0.26px;color:#000;line-height:20px;height:20px;white-space:pre;">Pos: 0/18,0</span>
<span id="sr" style="left:368.5px;top:103px;font-size:13px;letter-spacing:-0.36px;color:#6d6d6d;line-height:20px;height:20px;white-space:pre;">Search...</span>
<span id="aa1" style="left:681.0px;top:104px;font-size:10px;transform-origin:0 0;transform:scaleX(0.900);color:#555;line-height:20px;height:20px;white-space:pre;">Aa</span>
<span id="aa2" style="left:707.5px;top:104px;font-size:10px;transform-origin:0 0;transform:scaleX(0.900);color:#555;line-height:20px;height:20px;white-space:pre;">Aa</span>
</body>
</html>
